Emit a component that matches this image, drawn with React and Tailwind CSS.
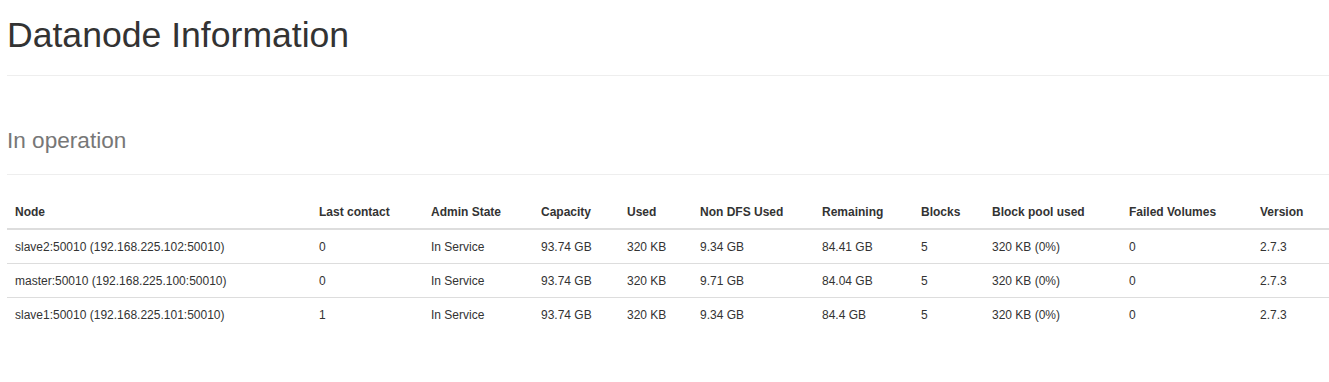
import React from "react";

const cols = [
  { label: "Node", w: "w-[304px]" },
  { label: "Last contact", w: "w-[112px]" },
  { label: "Admin State", w: "w-[110px]" },
  { label: "Capacity", w: "w-[86px]" },
  { label: "Used", w: "w-[73px]" },
  { label: "Non DFS Used", w: "w-[122px]" },
  { label: "Remaining", w: "w-[99px]" },
  { label: "Blocks", w: "w-[71px]" },
  { label: "Block pool used", w: "w-[137px]" },
  { label: "Failed Volumes", w: "w-[131px]" },
  { label: "Version", w: "w-[77px]" },
];

const rows = [
  ["slave2:50010 (192.168.225.102:50010)", "0", "In Service", "93.74 GB", "320 KB", "9.34 GB", "84.41 GB", "5", "320 KB (0%)", "0", "2.7.3"],
  ["master:50010 (192.168.225.100:50010)", "0", "In Service", "93.74 GB", "320 KB", "9.71 GB", "84.04 GB", "5", "320 KB (0%)", "0", "2.7.3"],
  ["slave1:50010 (192.168.225.101:50010)", "1", "In Service", "93.74 GB", "320 KB", "9.34 GB", "84.4 GB", "5", "320 KB (0%)", "0", "2.7.3"],
];

export default function App() {
  return (
    <div
      className="bg-white text-[#333] pl-[7px] pt-[16px] min-h-[382px]"
      style={{ fontFamily: '"Liberation Sans", Arial, Helvetica, sans-serif' }}
    >
      <div className="border-b border-[#eee] pb-[9px]">
        <h1 className="text-[35.6px] leading-[39.6px] font-normal mb-[10px]">Datanode Information</h1>
      </div>
      <div className="border-b border-[#eee] pb-[9px] mt-[40px]">
        <h1 className="text-[36px] leading-[39.6px] font-normal mb-[10px]">
          <span className="text-[22.6px] leading-none text-[#777]">In operation</span>
        </h1>
      </div>
      <table className="mt-[20px] w-[1322px] table-fixed border-collapse text-[12px] leading-[17px]">
        <colgroup>
          {cols.map((c) => (
            <col key={c.label} className={c.w} />
          ))}
        </colgroup>
        <thead>
          <tr>
            {cols.map((c) => (
              <th
                key={c.label}
                className="text-left font-bold px-[8px] pt-[9px] pb-[7px] border-b-2 border-[#ddd] whitespace-nowrap"
              >
                {c.label}
              </th>
            ))}
          </tr>
        </thead>
        <tbody>
          {rows.map((r, i) => (
            <tr key={i}>
              {r.map((v, j) => (
                <td
                  key={j}
                  className={`px-[8px] pt-[9px] pb-[7px] whitespace-nowrap ${i > 0 ? "border-t border-[#ddd]" : ""}`}
                >
                  {v}
                </td>
              ))}
            </tr>
          ))}
        </tbody>
      </table>
    </div>
  );
}
